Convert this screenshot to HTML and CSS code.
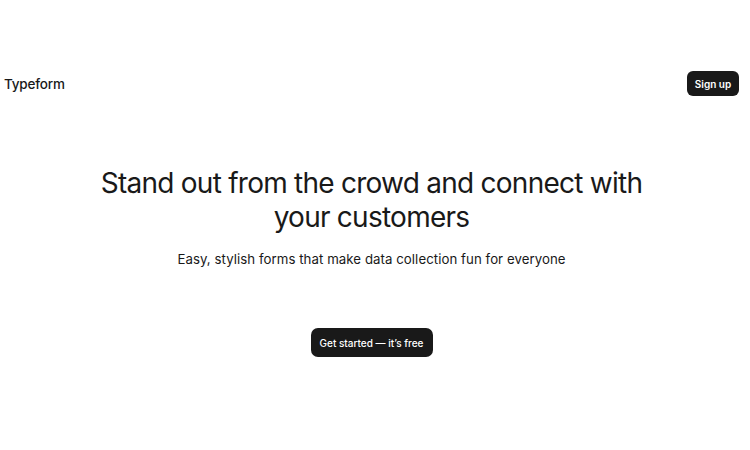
FILE: index.html
```html
<!DOCTYPE html>
<html>
<head>
<meta charset="utf-8">
<link rel="stylesheet" href="styles.css">
</head>
<body>
<header class="nav">
  <div class="logo">Typeform</div>
  <button class="signup">Sign up</button>
</header>
<main class="hero">
  <h1 class="title">Stand out from the crowd and connect with<br>your customers</h1>
  <p class="subtitle">Easy, stylish forms that make data collection fun for everyone</p>
  <button class="cta">Get started — it’s free</button>
</main>
</body>
</html>
```
FILE: styles.css
```css
html, body {
  margin: 0;
  padding: 0;
  background: #ffffff;
  color: #191919;
  font-family: Inter, "Noto Sans", sans-serif;
}
body {
  padding-right: 7px;
}
.nav {
  display: flex;
  justify-content: space-between;
  align-items: center;
  padding: 71px 4px 0 4px;
}
.logo {
  font-size: 13.5px;
  font-weight: 500;
  letter-spacing: -0.2px;
}
.signup {
  background: #191919;
  color: #fff;
  border: none;
  border-radius: 6px;
  height: 25px;
  width: 52px;
  font-family: inherit;
  font-size: 10px;
  font-weight: 600;
  padding: 0;
}
.hero {
  display: flex;
  flex-direction: column;
  align-items: center;
  text-align: center;
  padding-top: 70px;
}
.title {
  margin: 0;
  font-size: 28px;
  font-weight: 400;
  line-height: 34px;
  letter-spacing: -0.75px;
}
.subtitle {
  margin: 17px 0 0;
  font-size: 13.25px;
  font-weight: 400;
  letter-spacing: 0.05px;
}
.cta {
  margin-top: 61px;
  background: #191919;
  color: #fff;
  border: none;
  border-radius: 7px;
  height: 29px;
  width: 122px;
  font-family: inherit;
  font-size: 10px;
  font-weight: 500;
  padding: 0;
}
```
